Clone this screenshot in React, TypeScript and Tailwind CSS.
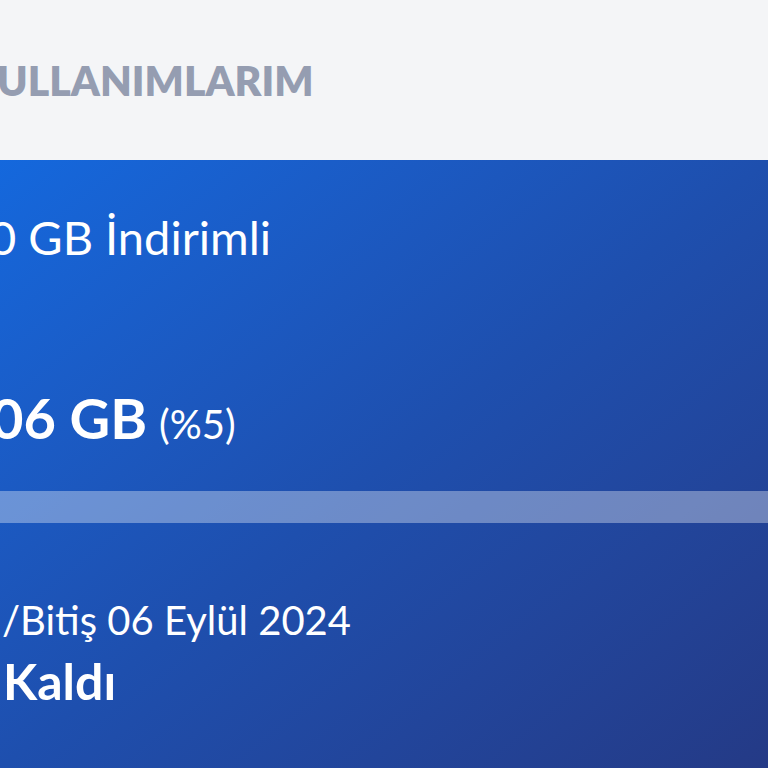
export default function App() {
  return (
    <div className="flex h-[768px] w-[768px] flex-col overflow-hidden bg-[#f4f5f7] font-['Lato',sans-serif]">
      <header className="h-[160px] shrink-0 pt-[60px]">
        <h1 className="-ml-[3px] whitespace-nowrap text-[41px] font-extrabold leading-none text-[#959db1]">
          ULLANIMLARIM
        </h1>
      </header>

      <section className="flex flex-1 flex-col bg-gradient-to-br from-[#1468dd] via-[#1e4fae] to-[#243a86] pt-[54px] text-white">
        <p className="-ml-[11px] whitespace-nowrap text-[47px] leading-none">0 GB İndirimli</p>

        <p className="-ml-[9px] mt-[129px] whitespace-nowrap leading-none">
          <span className="text-[56px] font-bold">06 GB</span>
          <span className="ml-3 text-[40px]">(%5)</span>
        </p>

        <div className="mt-[45px] h-[32px] w-full bg-white/35" />

        <p className="ml-[2px] mt-[77px] whitespace-nowrap text-[40px] leading-none">/Bitiş 06 Eylül 2024</p>
        <p className="ml-[3px] mt-[16px] whitespace-nowrap text-[50px] font-bold leading-none">Kaldı</p>
      </section>
    </div>
  )
}
